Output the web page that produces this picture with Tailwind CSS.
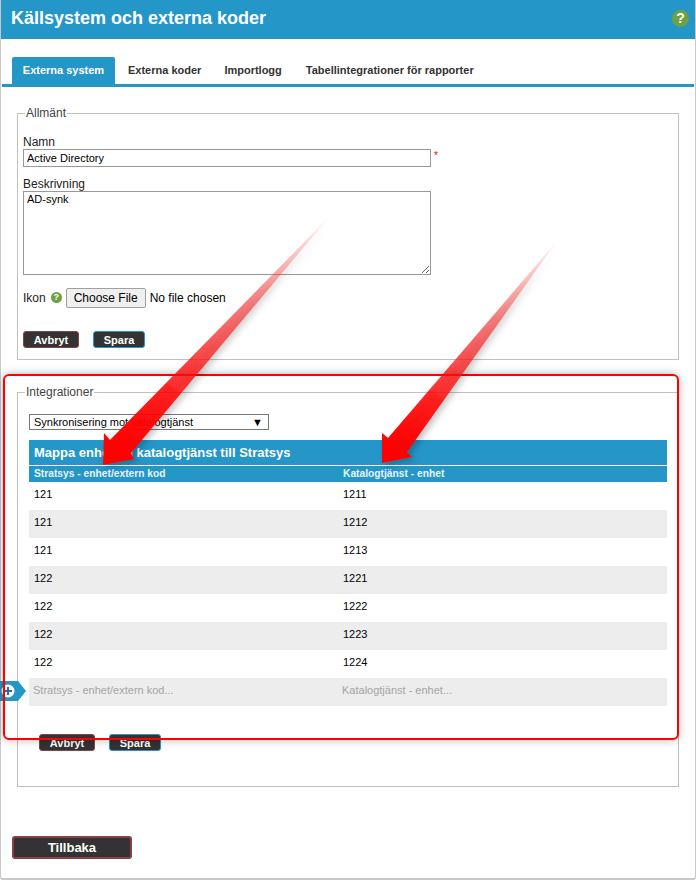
<!DOCTYPE html>
<html lang="sv">
<head>
<meta charset="utf-8">
<title>Källsystem och externa koder</title>
<script src="https://cdn.jsdelivr.net/npm/@tailwindcss/browser@4"></script>
</head>
<body class="bg-white font-['Liberation_Sans',Arial,sans-serif] text-[12px] text-[#222]">
<div class="relative w-[696px] h-[881px] overflow-hidden">
  <div class="h-[880px] border-2 border-t-0 border-r-1 border-l-1 border-[#c8c8c8] rounded-b-[3px]">
    <header class="h-[39px] bg-[#2596c8] flex items-center justify-between pl-[10px] pr-[6px]">
      <h1 class="text-[18px] font-bold text-white relative top-[-1px]">Källsystem och externa koder</h1>
      <span class="w-[17px] h-[17px] rounded-full bg-[#6fa044] text-white text-[14px] font-bold flex items-center justify-center relative top-[-1px]">?</span>
    </header>

    <nav class="mt-[18px] ml-[1px] mr-[1px] flex items-end h-[30px] border-b-[3px] border-[#2596c8] pl-[10px] text-[11px] font-bold text-[#333]">
      <a class="w-[103px] h-[27px] flex items-center justify-center bg-[#2596c8] text-white rounded-t-[2px]">Externa system</a>
      <a class="h-[27px] flex items-center ml-[13px]">Externa koder</a>
      <a class="h-[27px] flex items-center ml-[23px]">Importlogg</a>
      <a class="h-[27px] flex items-center ml-[24px]">Tabellintegrationer för rapporter</a>
    </nav>

    <fieldset class="mt-[19px] ml-[16px] w-[662px] h-[254px] border border-[#c0c0c0] px-[5px] pt-[15px]">
      <legend class="ml-[2px] px-[1px] text-[12px] leading-[14px] text-[#444]">Allmänt</legend>
      <label class="block leading-[14px] text-[#222]">Namn</label>
      <div class="flex items-start">
        <input class="w-[408px] h-[18px] border border-[#999] px-[3px] text-[11px] text-black outline-none" value="Active Directory">
        <span class="ml-[3px] text-[10px] leading-[14px] text-red-600">*</span>
      </div>
      <label class="block mt-[10px] leading-[14px] text-[#222]">Beskrivning</label>
      <textarea class="block w-[408px] h-[84px] border border-[#999] px-[3px] py-0 text-[11px] leading-[15px] text-black outline-none">AD-synk</textarea>
      <div class="flex items-center mt-[13px] h-[19px]">
        <span>Ikon</span>
        <span class="ml-[5px] w-[11px] h-[11px] rounded-full bg-[#6fa044] text-white text-[9px] font-bold flex items-center justify-center">?</span>
        <button class="ml-[4px] w-[80px] h-[20px] bg-[#efefef] border border-[#a0a0a0] rounded-[2px] text-[12px] text-black">Choose File</button>
        <span class="ml-[4px] text-black">No file chosen</span>
      </div>
      <div class="flex mt-[24px] gap-[14px] font-bold text-[11px] text-white">
        <button class="w-[56px] h-[17px] bg-[#333] border border-[#8a4044] rounded-[3px]">Avbryt</button>
        <button class="w-[52px] h-[17px] bg-[#333] border border-[#2596c8] rounded-[3px]">Spara</button>
      </div>
    </fieldset>

    <fieldset class="mt-[25px] ml-[16px] w-[662px] h-[402px] border border-[#c0c0c0] px-[11px] pt-[15px]">
      <legend class="-ml-[4px] px-[1px] text-[12px] leading-[14px] text-[#444]">Integrationer</legend>
      <div class="w-[240px] h-[16px] border border-[#777] flex items-center justify-between pl-[4px] pr-[5px] text-[11px] text-black">
        <span>Synkronisering mot katalogtjänst</span><span class="text-[11px]">▼</span>
      </div>
      <div class="mt-[10px] w-[638px]">
        <div class="h-[25px] bg-[#2596c8] flex items-center px-[5px] text-[13px] font-bold text-white">Mappa enheter i katalogtjänst till Stratsys</div>
        <div class="mt-[1px] h-[16px] bg-[#2596c8] grid grid-cols-[309px_1fr] items-center px-[5px] text-[10.25px] font-bold text-[#e8f4fa]">
          <span>Stratsys - enhet/extern kod</span><span>Katalogtjänst - enhet</span>
        </div>
        <div class="text-[11px] text-black">
          <div class="h-[28px] grid grid-cols-[309px_1fr] items-center px-[5px] pb-[4px]"><span>121</span><span>1211</span></div>
          <div class="h-[28px] grid grid-cols-[309px_1fr] items-center px-[5px] pb-[4px] bg-[#ededed]"><span>121</span><span>1212</span></div>
          <div class="h-[28px] grid grid-cols-[309px_1fr] items-center px-[5px] pb-[4px]"><span>121</span><span>1213</span></div>
          <div class="h-[28px] grid grid-cols-[309px_1fr] items-center px-[5px] pb-[4px] bg-[#ededed]"><span>122</span><span>1221</span></div>
          <div class="h-[28px] grid grid-cols-[309px_1fr] items-center px-[5px] pb-[4px]"><span>122</span><span>1222</span></div>
          <div class="h-[28px] grid grid-cols-[309px_1fr] items-center px-[5px] pb-[4px] bg-[#ededed]"><span>122</span><span>1223</span></div>
          <div class="h-[28px] grid grid-cols-[309px_1fr] items-center px-[5px] pb-[4px]"><span>122</span><span>1224</span></div>
          <div class="h-[28px] grid grid-cols-[309px_1fr] items-center pl-[4px] pb-[4px] bg-[#ededed] text-[#a5a5a5] text-[11px]"><span>Stratsys - enhet/extern kod...</span><span>Katalogtjänst - enhet...</span></div>
        </div>
      </div>
      <div class="flex mt-[28px] ml-[10px] gap-[14px] font-bold text-[11px] text-white">
        <button class="w-[56px] h-[17px] bg-[#333] border border-[#8a4044] rounded-[3px]">Avbryt</button>
        <button class="w-[52px] h-[17px] bg-[#333] border border-[#2596c8] rounded-[3px]">Spara</button>
      </div>
    </fieldset>

    <button class="block mt-[49px] ml-[11px] w-[120px] h-[23px] bg-[#333] border-2 border-[#8a4044] rounded-[3px] text-white font-bold text-[13px]">Tillbaka</button>
  </div>

  <!-- add-row marker -->
  <svg class="absolute left-0 top-[681px]" width="26" height="20" viewBox="0 0 26 20">
    <path d="M0 0H18L26 10L18 20H0Z" fill="#2596c8"/>
    <circle cx="8" cy="10" r="6.5" fill="#fff"/>
    <path d="M8 6V14M4 10H12" stroke="#1f6f9f" stroke-width="2"/>
  </svg>

  <!-- annotation frame -->
  <div class="absolute left-[3px] top-[374px] w-[676px] h-[366px] border-2 border-[#f00] rounded-[6px] shadow-[0_0_10px_rgba(0,0,0,0.28)] pointer-events-none"></div>

  <!-- annotation arrows -->
  <svg class="absolute left-0 top-0 pointer-events-none" width="696" height="881" viewBox="0 0 696 881">
    <defs>
      <linearGradient id="a1" gradientUnits="userSpaceOnUse" x1="103" y1="465" x2="330" y2="216">
        <stop offset="0" stop-color="#f00"/>
        <stop offset="0.12" stop-color="#f00" stop-opacity="0.97"/>
        <stop offset="0.25" stop-color="#f00" stop-opacity="0.88"/>
        <stop offset="0.65" stop-color="#e33" stop-opacity="0.62"/>
        <stop offset="1" stop-color="#e33" stop-opacity="0.02"/>
      </linearGradient>
      <linearGradient id="a2" gradientUnits="userSpaceOnUse" x1="382" y1="463" x2="557" y2="241">
        <stop offset="0" stop-color="#f00"/>
        <stop offset="0.12" stop-color="#f00" stop-opacity="0.97"/>
        <stop offset="0.25" stop-color="#f00" stop-opacity="0.88"/>
        <stop offset="0.65" stop-color="#e33" stop-opacity="0.62"/>
        <stop offset="1" stop-color="#e33" stop-opacity="0.02"/>
      </linearGradient>
      <filter id="s" x="-20%" y="-20%" width="140%" height="140%">
        <feDropShadow dx="3" dy="3" stdDeviation="3" flood-color="#000" flood-opacity="0.25"/>
      </filter>
    </defs>
    <path filter="url(#s)" d="M103 465L104 433L110 440L330 216L131 453L134 459Z" fill="url(#a1)"/>
    <path filter="url(#s)" d="M382 463L382 433L388 438L557 241L407 452L412 457Z" fill="url(#a2)"/>
  </svg>
</div>
</body>
</html>
